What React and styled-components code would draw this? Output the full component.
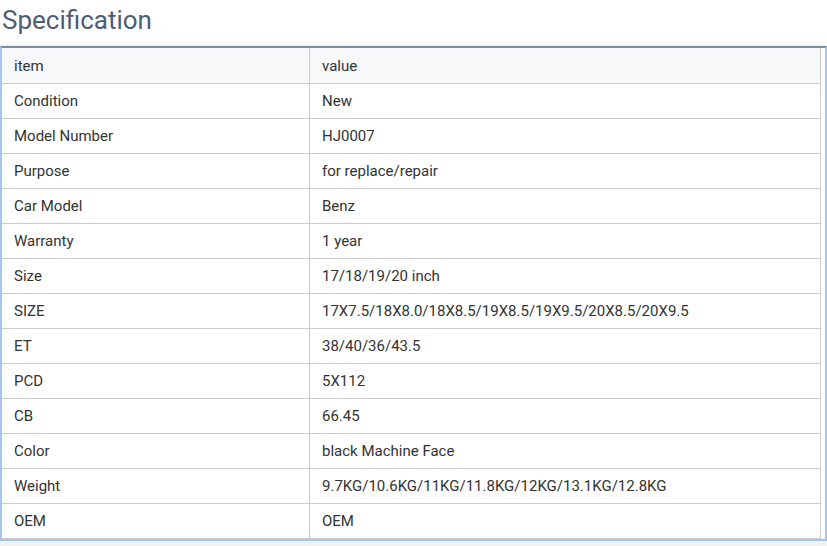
import styled, { createGlobalStyle } from "styled-components";

const GlobalStyle = createGlobalStyle`
  body {
    margin: 0;
    background: #ffffff;
    font-family: Roboto, "Liberation Sans", Arial, sans-serif;
  }
`;

const specs = [
  ["Condition", "New"],
  ["Model Number", "HJ0007"],
  ["Purpose", "for replace/repair"],
  ["Car Model", "Benz"],
  ["Warranty", "1 year"],
  ["Size", "17/18/19/20 inch"],
  ["SIZE", "17X7.5/18X8.0/18X8.5/19X8.5/19X9.5/20X8.5/20X9.5"],
  ["ET", "38/40/36/43.5"],
  ["PCD", "5X112"],
  ["CB", "66.45"],
  ["Color", "black Machine Face"],
  ["Weight", "9.7KG/10.6KG/11KG/11.8KG/12KG/13.1KG/12.8KG"],
  ["OEM", "OEM"],
];

const Page = styled.div`
  width: 827px;
  height: 546px;
  background: #f1f2f4;
  overflow: hidden;
`;

const Title = styled.h2`
  margin: 0;
  height: 46px;
  padding: 4px 0 0 2px;
  box-sizing: border-box;
  background: #ffffff;
  font-family: Roboto, "Liberation Sans", Arial, sans-serif;
  font-weight: 400;
  font-size: 26px;
  line-height: 32px;
  color: #4f5c71;
  border-bottom: 1px solid #eef0f3;
`;

const Panel = styled.div`
  background: #ffffff;
  border-top: 2px solid #7f8b9c;
  border-left: 2px solid #a9c6ea;
  border-right: 2px solid #a9c6ea;
  border-bottom: 2px solid #a9c6ea;
  padding-right: 4px;
  width: 827px;
  box-sizing: border-box;
`;

const Table = styled.table`
  width: 819px;
  border-collapse: collapse;
  table-layout: fixed;
  font-size: 15px;
  color: #333333;
`;

const Row = styled.tr`
  background: ${(p) => (p.$head ? "#f7f8fa" : "#ffffff")};
`;

const Cell = styled.td`
  height: ${(p) => (p.$first ? "35px" : "34px")};
  padding: 0 12px;
  border: 1px solid #cccccc;
  border-top: ${(p) => (p.$first ? "none" : "1px solid #cccccc")};
  border-left: ${(p) => (p.$left ? "none" : "1px solid #cccccc")};
  width: ${(p) => (p.$left ? "283px" : "auto")};
  white-space: nowrap;
`;

export default function App() {
  return (
    <Page>
      <GlobalStyle />
      <Title>Specification</Title>
      <Panel>
        <Table>
          <tbody>
            <Row $head>
              <Cell $left $first>item</Cell>
              <Cell $first>value</Cell>
            </Row>
            {specs.map(([k, v]) => (
              <Row key={k}>
                <Cell $left>{k}</Cell>
                <Cell>{v}</Cell>
              </Row>
            ))}
          </tbody>
        </Table>
      </Panel>
    </Page>
  );
}
